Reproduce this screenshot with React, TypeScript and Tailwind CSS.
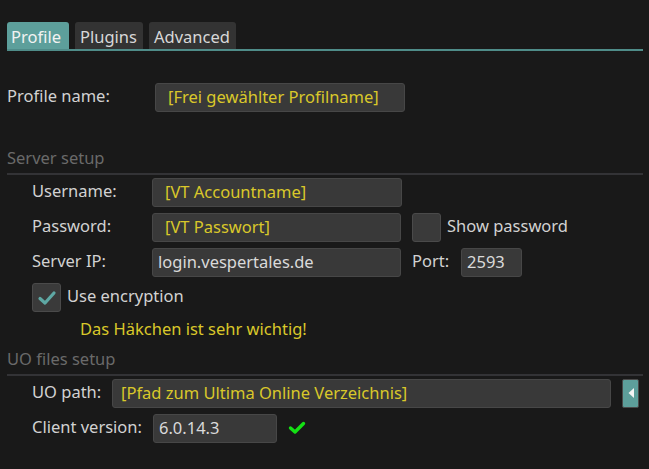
const field =
  "h-[29px] flex items-center rounded-[3px] bg-[#393939] border border-[#474747] text-[16.5px]";
const yellow = "text-[#d9c82a]";
const label = "text-[16.5px] text-[#d2d2d2] pb-[2px]";

function CheckBox({ checked }: { checked?: boolean }) {
  return (
    <div className="w-[29px] h-[29px] rounded-[3px] bg-[#3a3a3a] border border-[#4a4a4a] flex items-center justify-center">
      {checked && (
        <svg width="20" height="16" viewBox="0 0 20 16">
          <path d="M3 8.5 L8 13 L17 3" fill="none" stroke="#5ea8a4" strokeWidth="3.2" strokeLinecap="round" strokeLinejoin="round" />
        </svg>
      )}
    </div>
  );
}

function Section({ title }: { title: string }) {
  return (
    <div className="flex flex-col">
      <div className="h-[20px] leading-[20px] text-[16.5px] text-[#6a6a6a]">{title}</div>
      <div className="mt-[5px] h-[2px] bg-[#333336]" />
    </div>
  );
}

export default function App() {
  return (
    <div
      className="w-[649px] h-[469px] bg-[#191919] overflow-hidden"
      style={{ fontFamily: '"Noto Sans", "Open Sans", sans-serif' }}
    >
      <div className="w-[636px] ml-[7px] pt-[22px] flex flex-col">
        {/* Tabs */}
        <div className="flex items-end gap-[6px] text-[16.5px]">
          <div className="w-[62px] h-[27px] rounded-t-[3px] bg-[#5d9f9b] text-[#f2f2f2] flex items-center pt-[3px] pl-[4px]">Profile</div>
          <div className="w-[68px] h-[27px] rounded-t-[3px] bg-[#333333] text-[#d8d8d8] flex items-center pt-[3px] pl-[5px]">Plugins</div>
          <div className="w-[87px] h-[27px] rounded-t-[3px] bg-[#333333] text-[#d8d8d8] flex items-center pt-[3px] pl-[5px]">Advanced</div>
        </div>
        <div className="h-[2px] bg-[#4f8c89]" />

        {/* Profile name */}
        <div className="mt-[32px] flex items-center">
          <div className={`${label} w-[148px]`}>Profile name:</div>
          <div className={`${field} w-[250px] px-[12px] ${yellow}`}>[Frei gewählter Profilname]</div>
        </div>

        {/* Server setup */}
        <div className="mt-[36px]">
          <Section title="Server setup" />
        </div>
        <div className="pl-[25px] mt-[3px] flex flex-col gap-[6px]">
          <div className="flex items-center">
            <div className={`${label} w-[120px]`}>Username:</div>
            <div className={`${field} w-[250px] px-[12px] ${yellow}`}>[VT Accountname]</div>
          </div>
          <div className="flex items-center">
            <div className={`${label} w-[120px]`}>Password:</div>
            <div className={`${field} w-[249px] px-[12px] ${yellow}`}>[VT Passwort]</div>
            <div className="ml-[11px]"><CheckBox /></div>
            <div className={`${label} ml-[6px]`}>Show password</div>
          </div>
          <div className="flex items-center">
            <div className={`${label} w-[120px]`}>Server IP:</div>
            <div className={`${field} w-[249px] px-[5px] text-[#dadada]`}>login.vespertales.de</div>
            <div className={`${label} ml-[11px] w-[49px]`}>Port:</div>
            <div className={`${field} w-[61px] px-[5px] text-[#dadada]`}>2593</div>
          </div>
          <div className="flex items-center">
            <CheckBox checked />
            <div className={`${label} ml-[6px]`}>Use encryption</div>
          </div>
        </div>
        <div className={`mt-[5px] ml-[73px] text-[16.5px] ${yellow}`}>Das Häkchen ist sehr wichtig!</div>

        {/* UO files setup */}
        <div className="mt-[7px]">
          <Section title="UO files setup" />
        </div>
        <div className="pl-[25px] mt-[3px] flex flex-col gap-[6px]">
          <div className="flex items-center">
            <div className={`${label} w-[80px]`}>UO path:</div>
            <div className={`${field} w-[499px] px-[8px] ${yellow}`}>[Pfad zum Ultima Online Verzeichnis]</div>
            <div className="ml-[11px] w-[17px] h-[29px] rounded-[2px] bg-[#5d9f9b] border border-[#4a4a4a] flex items-center justify-center">
              <svg width="8" height="12" viewBox="0 0 8 12">
                <path d="M7 1 L1.5 6 L7 11 Z" fill="#f4f4f4" />
              </svg>
            </div>
          </div>
          <div className="flex items-center">
            <div className={`${label} w-[121px]`}>Client version:</div>
            <div className={`${field} w-[124px] px-[5px] text-[#dadada]`}>6.0.14.3</div>
            <svg className="ml-[11px]" width="18" height="14" viewBox="0 0 18 14">
              <path d="M2.5 7 L7 11 L15.5 2.5" fill="none" stroke="#14e014" strokeWidth="3.4" strokeLinecap="round" strokeLinejoin="round" />
            </svg>
          </div>
        </div>
      </div>
    </div>
  );
}
